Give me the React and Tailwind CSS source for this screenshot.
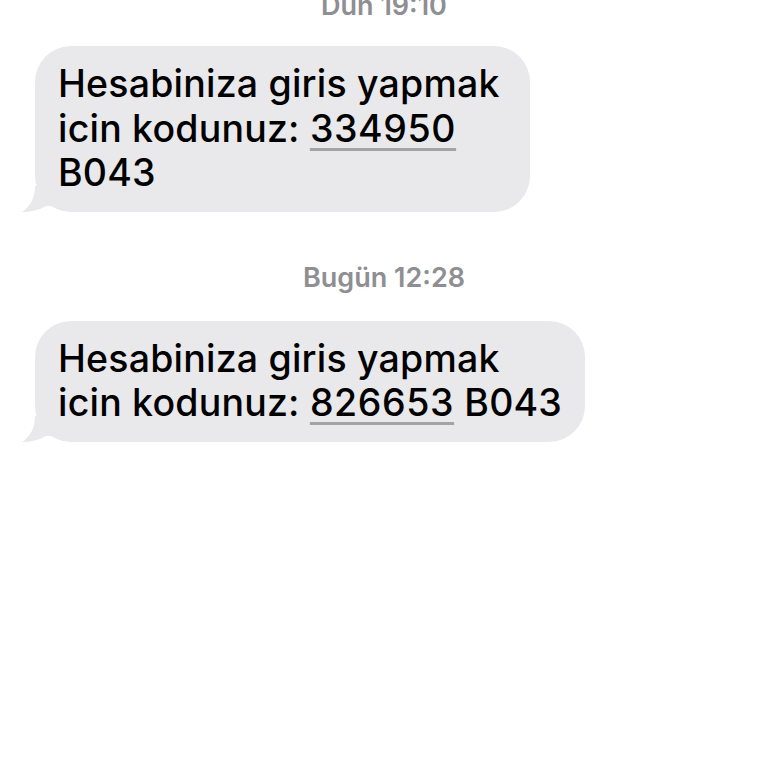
import React from 'react';

const messages = [
  { time: 'Dün 19:10', lines: ['Hesabiniza giris yapmak', ['icin kodunuz: ', '334950', ''], 'B043'], width: 'w-[495px]' },
  { time: 'Bugün 12:28', lines: ['Hesabiniza giris yapmak', ['icin kodunuz: ', '826653', ' B043']], width: 'w-[550px]' },
];

const Tail = () => (
  <svg className="absolute left-[-13px] bottom-0" width="30" height="26" viewBox="0 0 30 26">
    <path d="M13 0 C13 12 8 21 0 26 C9 26 17 24 24 20 L30 20 L30 0 Z" fill="#e9e9eb" />
  </svg>
);

const Bubble = ({ lines, width }) => (
  <div className={`relative ${width} bg-[#e9e9eb] rounded-[36px] pl-[23px] pr-[20px] py-[16px] text-black text-[37.5px] tracking-[0.2px] font-medium leading-[44.5px] whitespace-nowrap`}>
    {lines.map((line, i) => (
      <div key={i}>
        {Array.isArray(line) ? (
          <>
            {line[0]}
            <span className="underline decoration-[#a3a3a6] decoration-[3px] underline-offset-[6px] tracking-[0.6px]">{line[1]}</span>
            {line[2]}
          </>
        ) : line}
      </div>
    ))}
    <Tail />
  </div>
);

const App = () => {
  return (
    <div className="w-[768px] h-[768px] bg-white overflow-hidden font-['Inter','Liberation_Sans',sans-serif]">
      {messages.map((m, i) => (
        <div key={i}>
          <div className={`text-center text-[#8e8e93] font-semibold text-[27px] leading-[28px] ${i === 0 ? '-mt-[8px] mb-[26px]' : 'mt-[52px] mb-[29px]'}`}>
            {m.time}
          </div>
          <div className="pl-[35px]">
            <Bubble lines={m.lines} width={m.width} />
          </div>
        </div>
      ))}
    </div>
  );
};

export default App;
